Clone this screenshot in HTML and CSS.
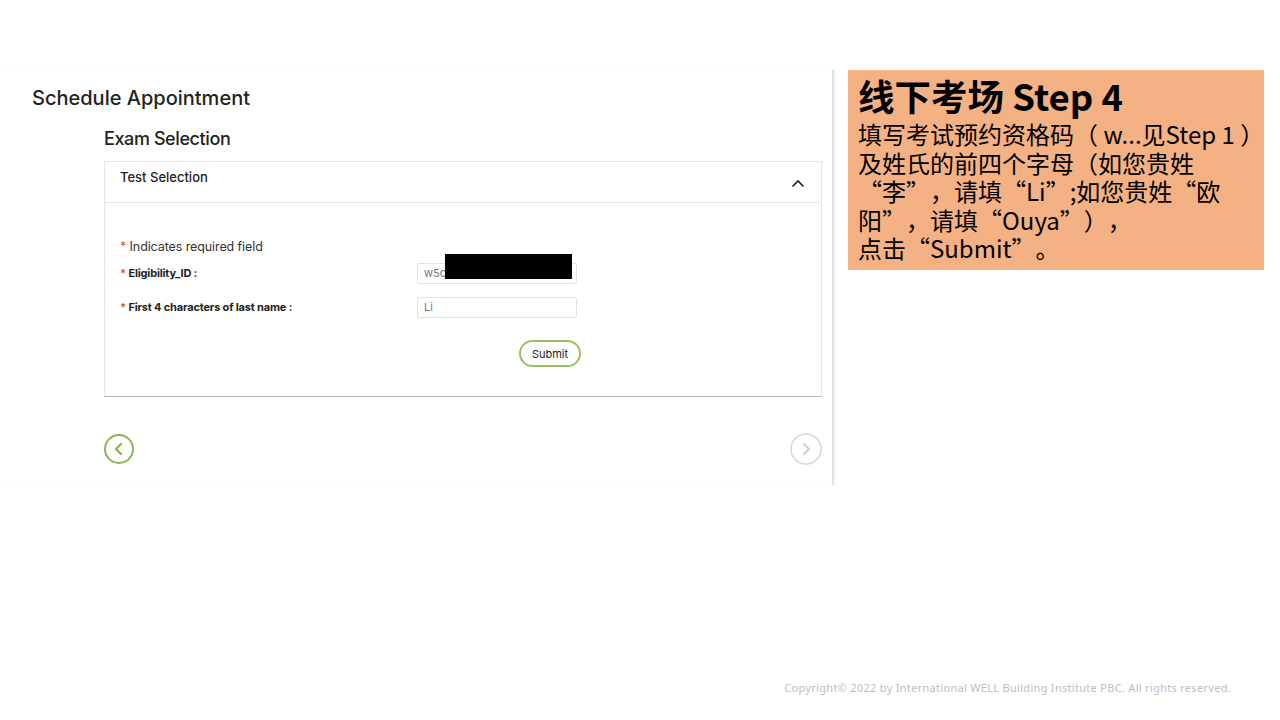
FILE: index.html
```html
<!DOCTYPE html>
<html>
<head>
<meta charset="utf-8">
<link rel="stylesheet" href="styles.css">
</head>
<body>
<div class="page">
  <div class="main">
    <section class="shot">
      <h1 class="title">Schedule Appointment</h1>
      <div class="content">
        <h2 class="subtitle">Exam Selection</h2>
        <div class="card">
          <div class="card-head">
            <span>Test Selection</span>
            <svg class="chev" width="14" height="9" viewBox="0 0 14 9"><path d="M1.5 7.5 L7 2 L12.5 7.5" fill="none" stroke="#222" stroke-width="1.6"/></svg>
          </div>
          <div class="card-body">
            <p class="note"><span class="req">*</span> Indicates required field</p>
            <div class="row">
              <label class="lbl"><span class="req">*</span> Eligibility_ID :</label>
              <div class="field">
                <div class="input">w5c</div>
                <div class="redact"></div>
              </div>
            </div>
            <div class="row">
              <label class="lbl"><span class="req">*</span> First 4 characters of last name :</label>
              <div class="field">
                <div class="input">Li</div>
              </div>
            </div>
            <div class="actions">
              <button class="submit">Submit</button>
            </div>
          </div>
        </div>
        <div class="nav">
          <span class="circ prev"><svg width="30" height="30" viewBox="0 0 30 30"><circle cx="15" cy="15" r="14" fill="none" stroke="#8db552" stroke-width="2"/><path d="M17 10 L12 15 L17 20" fill="none" stroke="#8db552" stroke-width="2.4" stroke-linecap="round" stroke-linejoin="round"/></svg></span>
          <span class="circ next"><svg width="32" height="32" viewBox="0 0 32 32"><circle cx="16" cy="16" r="15" fill="none" stroke="#d8d8d8" stroke-width="1.5"/><path d="M14 11 L19 16 L14 21" fill="none" stroke="#cfcfcf" stroke-width="2" stroke-linecap="round" stroke-linejoin="round"/></svg></span>
        </div>
      </div>
    </section>
    <aside class="callout">
      <div class="call-title">线下考场 Step 4</div>
      <div class="call-text">
        <div class="line">填写考试预约资格码（ w...见Step 1 ）</div>
        <div class="line">及姓氏的前四个字母（如您贵姓</div>
        <div class="line">“李”，请填“Li”;如您贵姓“欧</div>
        <div class="line">阳”，请填“Ouya”），</div>
        <div class="line">点击“Submit”。</div>
      </div>
    </aside>
  </div>
  <footer class="footer">Copyright© 2022 by International WELL Building Institute PBC. All rights reserved.</footer>
</div>
</body>
</html>
```
FILE: styles.css
```css
* { box-sizing: border-box; }
html, body { margin: 0; padding: 0; background: #fff; }
.page {
  width: 1280px;
  height: 720px;
  display: flex;
  flex-direction: column;
  font-family: Inter, "Liberation Sans", sans-serif;
  color: #222;
}
.main {
  display: flex;
  align-items: flex-start;
  padding-top: 70px;
}
.shot {
  width: 834px;
  height: 415px;
  border-right: 2px solid #e2e2e2;
  box-shadow: 2px 0 3px rgba(0,0,0,0.04);
  padding-top: 16px;
}
.title {
  margin: 0 0 0 32px;
  font-size: 20px;
  font-weight: 500;
  line-height: 24px;
  letter-spacing: 0;
  color: #222;
}
.content {
  margin-left: 104px;
  width: 718px;
}
.subtitle {
  margin: 18px 0 0 0;
  font-size: 18px;
  font-weight: 500;
  line-height: 22px;
  letter-spacing: -0.4px;
  color: #222;
}
.card {
  margin-top: 11px;
  border: 1px solid #e6e6e6;
  border-bottom: 1px solid #b5b5b5;
  height: 236px;
}
.card-head {
  height: 41px;
  border-bottom: 1px solid #e6e6e6;
  display: flex;
  justify-content: space-between;
  padding: 7px 16px 0 15px;
  font-size: 13px;
  font-weight: 500;
  color: #222;
}
.chev { margin-top: 10px; }
.card-body {
  padding: 36px 15px 0 15px;
}
.note {
  margin: 0;
  font-size: 12.5px;
  line-height: 16px;
  color: #333;
  letter-spacing: -0.1px;
}
.req { color: #e25241; }
.row {
  display: flex;
  align-items: center;
  height: 34px;
  padding-top: 2px;
}
.lbl {
  width: 297px;
  font-size: 11px;
  font-weight: 700;
  color: #222;
  letter-spacing: -0.17px;
}
.field { position: relative; }
.input {
  width: 160px;
  height: 21px;
  border: 1px solid #e2e2e2;
  border-radius: 2px;
  font-size: 11px;
  line-height: 19px;
  padding-left: 6px;
  color: #777;
}
.redact {
  position: absolute;
  left: 28px;
  top: -9px;
  width: 127px;
  height: 25px;
  background: #000;
}
.actions {
  display: flex;
  padding-left: 399px;
  margin-top: 17px;
}
.submit {
  width: 62px;
  height: 27px;
  border: 2px solid #9ac05f;
  border-radius: 14px;
  background: #fff;
  font-family: Inter, "Liberation Sans", sans-serif;
  font-size: 11px;
  color: #222;
  padding: 0;
}
.nav {
  display: flex;
  justify-content: space-between;
  align-items: center;
  margin-top: 36px;
}
.circ { display: block; line-height: 0; }
.callout {
  width: 416px;
  height: 200px;
  margin-left: 14px;
  background: #f4b183;
  padding: 2px 10px 0 10px;
  color: #000;
  font-family: "Noto Sans CJK SC", "Noto Sans", sans-serif;
  text-spacing-trim: space-all;
}
.call-title {
  font-size: 36.5px;
  font-weight: 700;
  line-height: 48px;
  letter-spacing: 0;
}
.call-text {
  font-size: 24px;
  letter-spacing: 0;
}
.line {
  height: 28.5px;
  line-height: 28.5px;
  white-space: nowrap;
}
.footer {
  margin-top: auto;
  padding: 0 49px 25px 0;
  text-align: right;
  font-family: "Noto Sans", "Liberation Sans", sans-serif;
  font-size: 11px;
  letter-spacing: 0.3px;
  color: #bdbdbd;
}
```
